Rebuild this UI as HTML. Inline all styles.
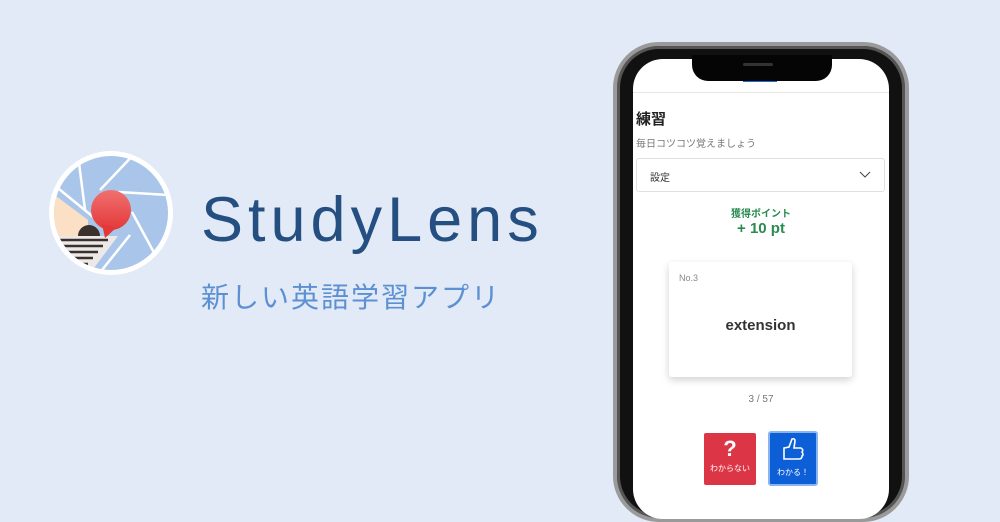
<!DOCTYPE html>
<html><head><meta charset="utf-8"><style>
*{margin:0;padding:0;box-sizing:border-box}
body{width:1000px;height:498px;overflow:hidden;background:#e1eaf6;position:relative;font-family:"Liberation Sans","Noto Sans CJK JP",sans-serif}
.abs{position:absolute}
</style></head><body>
<svg class="abs" style="left:48px;top:150px" width="126" height="126" viewBox="0 0 126 126">
<defs><clipPath id="c"><circle cx="63" cy="63" r="57"/></clipPath>
<linearGradient id="r" x1="0" y1="0" x2="0" y2="1"><stop offset="0" stop-color="#f07070"/><stop offset="1" stop-color="#e43838"/></linearGradient></defs>
<circle cx="63" cy="63" r="62" fill="#fff"/>
<g clip-path="url(#c)">
<rect width="126" height="126" fill="#a9c6ea"/>
<path d="M0 40 L40 70 L40 90 L0 90Z" fill="#fbe0c6"/>
<g stroke="#fff" stroke-width="2.5">
<line x1="30" y1="5" x2="37" y2="60"/><line x1="90" y1="0" x2="52" y2="40"/>
<line x1="120" y1="45" x2="70" y2="42"/><line x1="110" y1="110" x2="84" y2="62"/>
<line x1="50" y1="125" x2="82" y2="85"/><line x1="0" y1="30" x2="55" y2="75"/>
</g>
<path d="M30 86 A11 11 0 0 1 52 86Z" fill="#3a302c"/>
<path d="M0 86 L70 86 L40 126 L0 126Z" fill="#ece8e8"/>
<g stroke="#3a302c" stroke-width="2.5"><line x1="8" y1="90" x2="60" y2="90"/><line x1="8" y1="96" x2="55" y2="96"/><line x1="8" y1="102" x2="50" y2="102"/><line x1="8" y1="108" x2="45" y2="108"/><line x1="8" y1="114" x2="40" y2="114"/></g>
<circle cx="63" cy="60" r="20" fill="url(#r)"/>
<path d="M54 74 L57 88 L68 78Z" fill="#e43838"/>
</g>
</svg>
<div class="abs" style="left:201px;top:184px;font-size:63px;color:#244f80;letter-spacing:5px">StudyLens</div>
<div class="abs" style="left:201px;top:276px;font-size:28px;color:#5c90d2;letter-spacing:2px">新しい英語学習アプリ</div>

<div class="abs" style="left:613px;top:42px;width:296px;height:480px;border-radius:46px;background:#111;border:4px solid #9a9a9a;box-shadow:inset 0 0 0 3px #555"></div>
<div class="abs" style="left:633px;top:59px;width:256px;height:460px;border-radius:30px;background:#fff;overflow:hidden">
 <div class="abs" style="left:0;top:33px;width:256px;height:1px;background:#e6e6e6"></div>
 <div class="abs" style="left:110px;top:20px;width:34px;height:3px;background:#1a6ad8"></div>
 <div class="abs" style="left:3px;top:49px;font-size:15px;font-weight:bold;color:#222">練習</div>
 <div class="abs" style="left:3px;top:76px;font-size:10px;color:#777">毎日コツコツ覚えましょう</div>
 <div class="abs" style="left:3px;top:99px;width:249px;height:34px;border:1px solid #e0e0e0;border-radius:3px"></div>
 <div class="abs" style="left:17px;top:110px;font-size:10px;color:#333">設定</div>
 <svg class="abs" style="left:226px;top:112px" width="12" height="8"><path d="M1 1 L6 6 L11 1" stroke="#444" fill="none"/></svg>
 <div class="abs" style="left:0;top:146px;width:256px;text-align:center;font-size:10px;font-weight:bold;color:#2a8a50">獲得ポイント</div>
 <div class="abs" style="left:0;top:161px;width:256px;text-align:center;font-size:15px;font-weight:bold;color:#2a8a50">+ 10 pt</div>
 <div class="abs" style="left:36px;top:203px;width:183px;height:115px;background:#fff;border-radius:3px;box-shadow:0 3px 8px rgba(0,0,0,.18)"></div>
 <div class="abs" style="left:46px;top:214px;font-size:9px;color:#888">No.3</div>
 <div class="abs" style="left:36px;top:258px;width:183px;text-align:center;font-size:15px;font-weight:bold;color:#333">extension</div>
 <div class="abs" style="left:0;top:335px;width:256px;text-align:center;font-size:10px;color:#777">3 / 57</div>
 <div class="abs" style="left:71px;top:374px;width:52px;height:52px;background:#dc3545;border-radius:2px;color:#fff;text-align:center"><div style="font-size:22px;font-weight:bold;line-height:28px;margin-top:2px">?</div><div style="font-size:8px">わからない</div></div>
 <div class="abs" style="left:135px;top:372px;width:50px;height:55px;background:#0d5fd8;border:2px solid #8ab4f0;border-radius:3px;color:#fff;text-align:center">
  <svg width="24" height="26" viewBox="0 0 24 26" style="margin-top:3px"><path d="M3 12 L3 23 L18 23 Q21 23 21 20 Q23 19 21 16 Q23 14 20 12 L13 12 L14 5 Q14 2 11 3 L8 11 Z" stroke="#fff" stroke-width="1.6" fill="none"/></svg>
  <div style="font-size:8px">わかる！</div></div>
</div>
<div class="abs" style="left:692px;top:55px;width:140px;height:26px;background:#050505;border-radius:0 0 16px 16px"></div>
<div class="abs" style="left:743px;top:63px;width:30px;height:3px;background:#333;border-radius:2px"></div>
</body></html>
